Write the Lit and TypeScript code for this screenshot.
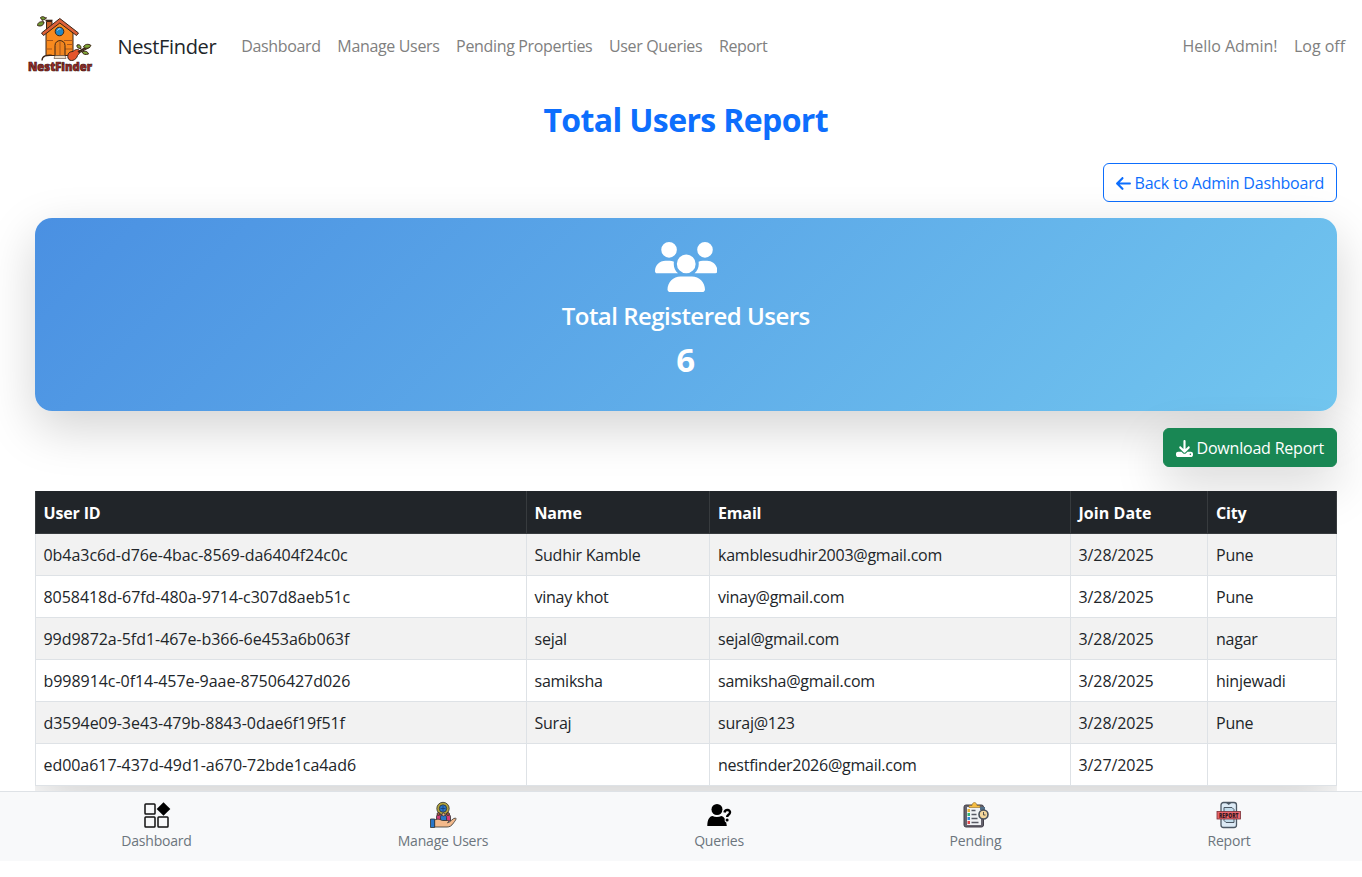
import { LitElement, html, svg, css } from "lit";
import { customElement } from "lit/decorators.js";

interface User { id: string; name: string; email: string; joined: string; city: string; }

const USERS: User[] = [
  { id: "0b4a3c6d-d76e-4bac-8569-da6404f24c0c", name: "Sudhir Kamble", email: "kamblesudhir2003@gmail.com", joined: "3/28/2025", city: "Pune" },
  { id: "8058418d-67fd-480a-9714-c307d8aeb51c", name: "vinay khot", email: "vinay@gmail.com", joined: "3/28/2025", city: "Pune" },
  { id: "99d9872a-5fd1-467e-b366-6e453a6b063f", name: "sejal", email: "sejal@gmail.com", joined: "3/28/2025", city: "nagar" },
  { id: "b998914c-0f14-457e-9aae-87506427d026", name: "samiksha", email: "samiksha@gmail.com", joined: "3/28/2025", city: "hinjewadi" },
  { id: "d3594e09-3e43-479b-8843-0dae6f19f51f", name: "Suraj", email: "suraj@123", joined: "3/28/2025", city: "Pune" },
  { id: "ed00a617-437d-49d1-a670-72bde1ca4ad6", name: "", email: "nestfinder2026@gmail.com", joined: "3/27/2025", city: "" },
];

const LINKS = ["Dashboard", "Manage Users", "Pending Properties", "User Queries", "Report"];

const logo = svg`
  <svg class="logo" viewBox="0 0 66 64" width="66" height="64">
    <g stroke="#3b2416" stroke-width="1" stroke-linejoin="round">
      <path d="M19.500 15V5.500h5.500V11" fill="#c9622a"/>
      <path d="M18.500 4.500h7" stroke-width="1.600"/>
      <path d="M16 5.500C14 3.500 15.500 1 20 2" fill="none"/>
      <path d="M10.500 9.500c0-3 3-4.500 6.500-3.500 0 3-3 5-6.500 3.500z" fill="#6f9a32"/>
      <path d="M13.500 1.500c2-1.500 4.500-1 5 1.500-2 1.500-4.500 1-5-1.500z" fill="#6f9a32"/>
      <path d="M19 17 33 5l13 12v22.500H19z" fill="#f98a1e"/>
      <path d="M19 24.500h7M19 33h6M37 24.500h9M38 33h8M40 28.500h6" stroke="#a9561a" fill="none"/>
      <path d="M28 40V29.500c0-6.500 10-6.500 10 0V40z" fill="#ef8520"/>
      <path d="M33 26v13" stroke="#a9561a"/>
      <path d="M14.500 17 32.800 2.500 51.500 17l-2 2.500L32.800 7 16.500 19.500z" fill="#dc6038"/>
      <circle cx="32.500" cy="15.500" r="4.300" fill="#2187c5"/>
      <path d="M30.500 14.500c.5-1.500 2-2 3-1.500" stroke="#c4eaff" fill="none"/>
      <path d="M15 44.500c0-5 5-5.500 10-5.200M46 40l17-9" fill="none" stroke-width="1.300"/>
      <path d="M28 39.500h10l1 3H27z" fill="#eadbc8" stroke-width=".5"/>
      <path d="M41 42c-1-5 2-6.500 5-6.500 2-2 5-3 6.500-1 1 2-1 4-2 5-1 5-8 7-9.500 2.500z" fill="#e4552b"/>
      <path d="M51 36l9-5" stroke-width="2"/>
      <path d="M50 29c3-1 4 1 4 3.500-3 0-4.500-1-4-3.500zM56.500 31c1-3 5-3.500 7.500-1.500-1.500 3-5 3.500-7.500 1.500zM55 36c3-1.500 6-.5 6.500 2-3 1-5.500.5-6.500-2z" fill="#7fa636"/>
    </g>
    <text class="logo-text" x="1" y="54.500" textLength="64" lengthAdjust="spacingAndGlyphs">NestFinder</text>
  </svg>`;

const arrowIcon = svg`<svg class="arrow" viewBox="0 0 448 512"><path fill="currentColor" d="M9.400 233.400c-12.500 12.500-12.500 32.800 0 45.300l160 160c12.500 12.500 32.800 12.500 45.300 0s12.500-32.800 0-45.300L109.200 288 416 288c17.700 0 32-14.300 32-32s-14.300-32-32-32l-306.700 0L214.600 118.600c12.500-12.500 12.500-32.800 0-45.300s-32.800-12.500-45.300 0l-160 160z"/></svg>`;

const downloadIcon = svg`<svg class="down" viewBox="0 0 512 512"><path fill="currentColor" d="M288 32c0-17.700-14.300-32-32-32s-32 14.300-32 32V274.700l-73.400-73.400c-12.500-12.500-32.800-12.500-45.300 0s-12.500 32.800 0 45.300l128 128c12.500 12.500 32.800 12.500 45.300 0l128-128c12.500-12.500 12.500-32.800 0-45.300s-32.800-12.500-45.300 0L288 274.700V32zM64 352c-35.300 0-64 28.700-64 64v32c0 35.300 28.700 64 64 64H448c35.300 0 64-28.700 64-64V416c0-35.300-28.700-64-64-64H346.500l-45.300 45.300c-25 25-65.500 25-90.500 0L165.500 352H64zm368 56a24 24 0 1 1 0 48 24 24 0 1 1 0-48z"/></svg>`;

const usersIcon = svg`<svg class="users" viewBox="0 0 640 512"><path fill="currentColor" d="M144 0a80 80 0 1 1 0 160A80 80 0 1 1 144 0zM512 0a80 80 0 1 1 0 160A80 80 0 1 1 512 0zM0 298.700C0 239.800 47.800 192 106.700 192h42.700c15.900 0 31 3.500 44.600 9.700c-1.300 7.200-1.900 14.700-1.900 22.300c0 38.200 16.800 72.500 43.300 96c-.2 0-.4 0-.7 0H21.300C9.600 320 0 310.400 0 298.700zM405.300 320c-.2 0-.4 0-.7 0c26.600-23.500 43.300-57.800 43.300-96c0-7.600-.7-15-1.900-22.300c13.600-6.300 28.700-9.700 44.600-9.700h42.700C592.200 192 640 239.800 640 298.700c0 11.800-9.600 21.300-21.300 21.300H405.300zM224 224a96 96 0 1 1 192 0 96 96 0 1 1 -192 0zM128 485.300C128 411.700 187.700 352 261.300 352H378.700C452.300 352 512 411.700 512 485.300c0 14.700-11.900 26.700-26.700 26.700H154.700c-14.700 0-26.700-11.900-26.700-26.700z"/></svg>`;

const TABS = [
  { label: "Dashboard", cls: "t1", icon: svg`<svg class="tab-icon" viewBox="0 0 28 28">
      <g fill="none" stroke="#111" stroke-width="1.500"><rect x="2" y="3" width="10" height="10" rx=".8"/><rect x="2" y="16" width="10" height="10" rx=".8"/><rect x="15" y="16" width="10" height="10" rx=".8"/></g>
      <path d="M20.500 1.200l6.800 6.800-6.800 6.800L13.700 8z"/></svg>` },
  { label: "Manage Users", cls: "t2", icon: svg`<svg class="tab-icon" viewBox="0 0 28 28">
      <g stroke="#2f302d" stroke-width=".8" stroke-linejoin="round">
        <circle cx="14" cy="7.500" r="6.200" fill="#b4a43a"/><circle cx="14" cy="7.500" r="3.700" fill="#2876c9"/>
        <path d="M14 5v5M11.500 7.500h5" stroke="#173d72"/>
        <path d="M7.500 20v-4c0-4 5-4 5 0v4zM16 20v-4c0-4 5.500-4 5.500 0v4z" fill="#d23c76"/>
        <path d="M11.500 20v-3.500c0-4 6-4 6 0V20z" fill="#2876c9"/>
        <circle cx="9.500" cy="13" r="1.500" fill="#a6533e"/><circle cx="14.500" cy="13.500" r="1.500" fill="#f0b088"/><circle cx="19" cy="13" r="1.500" fill="#a6533e"/>
        <path d="M5.500 19c4-2 6 0 8 .5h5c2 .5 1 2 0 2.200 3-.2 5-4.700 8-4.700 1.500 1-1 3.500-2 5-2 3-4 4-6.500 4h-12.500z" fill="#f3b98b"/>
        <path d="M1.500 18h4.200v8.500H1.500z" fill="#2876c9"/></g></svg>` },
  { label: "Queries", cls: "t3", icon: svg`<svg class="tab-icon" viewBox="0 0 28 28">
      <circle cx="12" cy="8.500" r="5.500"/><path d="M2.300 25C2.300 18.500 4.500 15.500 7.500 15c2.500 1.200 6 1.200 9 0 2.500.5 3 2.500 4.500 5l.8 5z"/>
      <path d="M19.500 11.500c.5-3.500 6-3.200 5.500.2-.3 2.300-2.900 2-2.900 4.300" fill="none" stroke="#f8f9fa" stroke-width="4.500"/><circle cx="22.100" cy="19" r="2.500" fill="#f8f9fa"/>
      <path d="M19.500 11.500c.5-3.500 6-3.200 5.500.2-.3 2.300-2.900 2-2.900 4.300" fill="none" stroke="#000" stroke-width="2.400"/><circle cx="22.100" cy="19" r="1.500"/></svg>` },
  { label: "Pending", cls: "t4", icon: svg`<svg class="tab-icon" viewBox="0 0 28 28">
      <rect x="2" y="4" width="19.500" height="22" rx="2" fill="#65636d" stroke="#423f49"/><rect x="5" y="6" width="14" height="18" fill="#f0f2f5"/>
      <path d="M7 6V4.500h3c.3-4 4.500-4 5 0h3V6.500H7z" fill="#f5bd43" stroke="#8b6a2a" stroke-width=".6"/>
      <path d="M5.500 8h2.500v3H5.500z" fill="#edb533"/><path d="M5.500 12h2.500v3H5.500z" fill="#2fb673"/><path d="M5.500 16h2.500v3H5.500z" fill="#3287d5"/><path d="M5.500 20h2.500v3H5.500z" fill="#df4548"/>
      <path d="M9.500 9.500h4M9.500 13.500h5M9.500 17.500h6M9.500 21.500h7" stroke="#575a64" stroke-width="1.300"/>
      <path d="M18 6h5v3h-5z" fill="#526f88"/><circle cx="21.500" cy="13.500" r="4.500" fill="#f3d69b" stroke="#48505b" stroke-width="1.600"/><path d="M21.500 11v3h2" fill="none" stroke="#444" stroke-width=".9"/></svg>` },
  { label: "Report", cls: "t5", icon: svg`<svg class="tab-icon" viewBox="0 0 28 28">
      <rect x="6" y="1.500" width="15.500" height="25" rx="2.500" fill="#dceaf5" stroke="#4c5864" stroke-width="1.300"/><path d="M10.500 1.500l3.200 2.500L17 1.500z" fill="#4c5864"/>
      <path d="M9 6.500h8l2 2v13h-8l-2-2z" fill="#c1dbea" stroke="#4c5864"/>
      <rect x="2" y="10.500" width="23.500" height="7.500" fill="#e7656d" stroke="#7c2f36" stroke-width=".8"/>
      <text class="stamp" x="4" y="16.500" textLength="19.500" lengthAdjust="spacingAndGlyphs">REPORT</text></svg>` },
];

@customElement("app-root")
export class AppRoot extends LitElement {
  static styles = css`
    :host { display: block; height: 877px; overflow: hidden; background: #fff; color: #212529; font: 16px/25px "Open Sans", "Noto Sans", sans-serif; }
    * { box-sizing: border-box; }
    svg { display: block; flex: none; }
    .page { display: flex; flex-direction: column; height: 877px; }
    .navbar { display: flex; align-items: center; height: 92px; flex: none; padding: 0 17px 0 27px; color: #808080; white-space: nowrap; }
    .logo { margin-top: 4px; }
    .logo-text { font: 800 12px "Open Sans", sans-serif; letter-spacing: 0; fill: #a02b25; stroke: #3d1714; stroke-width: .7px; }
    .brand { margin: 0 25px 0 24.5px; font-size: 20px; color: #212529; letter-spacing: -0.35px; }
    .links, .account { display: flex; gap: 16.6px; }
    .links { letter-spacing: -0.34px; }
    .account { margin-left: auto; letter-spacing: -0.04px; }
    .body { display: flex; flex-direction: column; height: 699px; flex: none; padding: 0 25px 0 34.5px; overflow: hidden; }
    .inner { display: flex; flex-direction: column; width: 1302.5px; }
    h2 { margin: 8px 0 23px; text-align: center; font-size: 32px; line-height: 40px; font-weight: 700; color: #0d6efd; letter-spacing: -0.63px; }
    .btn { display: flex; align-items: center; align-self: flex-end; gap: 4px; height: 39px; padding: 2px 12px 0; border: 1px solid #0d6efd; border-radius: 6px; white-space: nowrap; letter-spacing: -0.2px; }
    .back { color: #0d6efd; width: 234.5px; }
    .download { margin: 17px 0 24.5px; height: 38.5px; width: 174.5px; color: #fff; background: #198754; border-color: #198754; box-shadow: 0 17px 50px rgba(0,0,0,.175); }
    .arrow { width: 15px; height: 17px; }
    .down { width: 17px; height: 17px; }
    .card { display: flex; flex-direction: column; align-items: center; height: 193px; margin-top: 16px; padding-top: 24px; border-radius: 17px; color: #fff; background: linear-gradient(135deg, #4a90e2, #72c6ef); box-shadow: 0 17px 50px rgba(0,0,0,.175); }
    .users { width: 62.5px; height: 50px; }
    .card-title { margin-top: 8px; font-size: 24px; line-height: 32px; font-weight: 600; letter-spacing: -0.52px; }
    .count { margin-top: 8px; font-size: 33px; line-height: 40px; font-weight: 700; }
    .table-wrap { height: 330px; flex: none; overflow: hidden; position: relative; background: #fff; }
    .table { display: grid; grid-template-columns: 491px 183.5px 360.5px 137.5px 130px; box-shadow: 0 17px 50px rgba(0,0,0,.175); }
    .cell { height: 42px; padding: 9px 8px 0; border: solid #dee2e6; border-width: 0 0 1px 1px; background: #fff; letter-spacing: -0.24px; white-space: nowrap; }
    .cell.c0 { letter-spacing: -0.05px; }
    .cell.c3 { letter-spacing: -0.08px; }
    .cell.c4 { border-right-width: 1px; }
    .cell.odd { background: #f2f2f2; }
    .cell.head { height: 43px; padding-top: 10px; background: #212529; color: #fff; border-color: #373b3e; font-weight: 700; letter-spacing: -0.15px; }
    .cell.head.c3 { letter-spacing: 0.05px; }
    .tabs { display: flex; height: 69.500px; flex: none; gap: 206px; padding: 9px 0 0 121.5px; border-top: 1px solid #dee2e6; background: #f8f9fa; color: #6c757d; font-size: 14px; line-height: 22px; letter-spacing: -0.2px; white-space: nowrap; }
    .tab { display: flex; flex-direction: column; align-items: center; gap: 1.400px; flex: none; }
    .t1 { width: 70px; } .t2 { width: 91px; } .t3 { width: 49px; } .t4 { width: 52px; } .t5 { width: 43px; }
    .tab-icon { width: 28px; height: 28px; }
    .stamp { font: 800 6px "Open Sans", sans-serif; letter-spacing: 0; fill: #35171b; }
  `;

  render() {
    return html`
      <div class="page">
        <nav class="navbar">
          ${logo}<span class="brand">NestFinder</span>
          <div class="links">${LINKS.map((l) => html`<span>${l}</span>`)}</div>
          <div class="account"><span>Hello Admin!</span><span>Log off</span></div>
        </nav>
        <main class="body">
          <div class="inner">
            <h2>Total Users Report</h2>
            <div class="btn back">${arrowIcon}<span>Back to Admin Dashboard</span></div>
            <section class="card">
              ${usersIcon}
              <div class="card-title">Total Registered Users</div>
              <div class="count">6</div>
            </section>
            <div class="btn download">${downloadIcon}<span>Download Report</span></div>
            <div class="table-wrap">
              <div class="table">
                ${["User ID", "Name", "Email", "Join Date", "City"].map((h, i) => html`<div class="cell head c${i}">${h}</div>`)}
                ${USERS.map((u, r) => [u.id, u.name, u.email, u.joined, u.city].map((v, i) => html`<div class="cell c${i} ${r % 2 === 0 ? "odd" : ""}">${v}</div>`))}
              </div>
            </div>
          </div>
        </main>
        <footer class="tabs">
          ${TABS.map((t) => html`<div class="tab ${t.cls}">${t.icon}<span>${t.label}</span></div>`)}
        </footer>
      </div>`;
  }
}
